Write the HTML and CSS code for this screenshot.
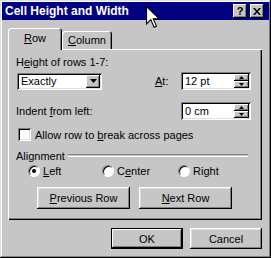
FILE: index.html
```html
<!DOCTYPE html>
<html lang="en">
<head>
    <meta charset="UTF-8">
    <title>Cell Height and Width</title>
    <link rel="stylesheet" href="styles.css">
</head>
<body>
    <div class="window">
        <div class="titlebar">
            <span class="title">Cell Height and Width</span>
            <div class="title-btns">
                <span class="tbtn">?</span>
                <span class="tbtn tbtn-close">
                    <svg width="8" height="7" viewBox="0 0 8 7"><path d="M0 0h2l2 2.5 2-2.5h2L5 3.5 8 7H6L4 4.5 2 7H0l3-3.5z" fill="#000"/></svg>
                </span>
            </div>
        </div>

        <div class="content">
            <div class="tabs">
                <div class="tab active"><u>R</u>ow</div>
                <div class="tab"><u>C</u>olumn</div>
            </div>

            <div class="panel">
                <div class="label">H<u>e</u>ight of rows 1-7:</div>

                <div class="field-grid">
                    <div class="combo">
                        <span class="combo-text">Exactly</span>
                        <span class="drop-btn"><svg width="7" height="4" viewBox="0 0 7 4"><path d="M0 0h7L3.5 4z" fill="#000"/></svg></span>
                    </div>
                    <span class="label"><u>A</u>t:</span>
                    <div class="spin">
                        <span class="spin-text">12 pt</span>
                        <span class="spin-btns">
                            <span class="spin-btn"><svg width="5" height="3" viewBox="0 0 5 3"><path d="M0 3h5L2.5 0z" fill="#000"/></svg></span>
                            <span class="spin-btn"><svg width="5" height="3" viewBox="0 0 5 3"><path d="M0 0h5L2.5 3z" fill="#000"/></svg></span>
                        </span>
                    </div>

                    <span class="label wide">Indent <u>f</u>rom left:</span>
                    <div class="spin">
                        <span class="spin-text">0 cm</span>
                        <span class="spin-btns">
                            <span class="spin-btn"><svg width="5" height="3" viewBox="0 0 5 3"><path d="M0 3h5L2.5 0z" fill="#000"/></svg></span>
                            <span class="spin-btn"><svg width="5" height="3" viewBox="0 0 5 3"><path d="M0 0h5L2.5 3z" fill="#000"/></svg></span>
                        </span>
                    </div>
                </div>

                <div class="check-row">
                    <span class="checkbox"></span>
                    <span>Allow row to <u>b</u>reak across pages</span>
                </div>

                <div class="group-title">
                    <span>Alignment</span>
                    <span class="etched"></span>
                </div>

                <div class="radios">
                    <div class="radio-item"><span class="radio checked"></span><span><u>L</u>eft</span></div>
                    <div class="radio-item"><span class="radio"></span><span>C<u>e</u>nter</span></div>
                    <div class="radio-item"><span class="radio"></span><span>Ri<u>g</u>ht</span></div>
                </div>

                <div class="row-btns">
                    <span class="btn"><u>P</u>revious Row</span>
                    <span class="btn"><u>N</u>ext Row</span>
                </div>
            </div>

            <div class="footer">
                <span class="btn btn-default">OK</span>
                <span class="btn btn-footer">Cancel</span>
            </div>
        </div>

        <svg class="cursor" width="14" height="23" viewBox="0 0 13 21">
            <path d="M0.5 0.5v16l4-4 3 7 2.2-1-3-6.8h5.6z" fill="#fff" stroke="#000" stroke-width="1"/>
        </svg>
    </div>
</body>
</html>
```

FILE: styles.css
```css
body {
    margin: 0;
    font-family: "Liberation Sans", Arial, sans-serif;
    font-size: 11px;
    color: #000;
    background: #c6c6c6;
}

.window {
    position: relative;
    width: 271px;
    height: 258px;
    box-sizing: border-box;
    padding: 2px;
    background: #c6c6c6;
    box-shadow: inset -1px -1px #000, inset 1px 1px #dfdfdf, inset -2px -2px #808080, inset 2px 2px #fff;
}

.titlebar {
    height: 18px;
    background: #000080;
    color: #fff;
    display: flex;
    align-items: center;
    padding: 0 5px 0 3px;
}

.title {
    flex: 1;
    font-weight: bold;
    font-size: 12px;
}

.title-btns {
    display: flex;
    gap: 3px;
}

.tbtn {
    width: 14px;
    height: 14px;
    box-sizing: border-box;
    display: flex;
    align-items: center;
    justify-content: center;
    background: #c6c6c6;
    color: #000;
    font-weight: bold;
    font-size: 11px;
    box-shadow: inset -1px -1px #000, inset 1px 1px #fff, inset -2px -2px #808080;
}

.content {
    padding: 8px 7px 0 6px;
}

.tabs {
    display: flex;
    align-items: flex-end;
    height: 21px;
    position: relative;
    z-index: 1;
}

.tab {
    height: 18px;
    width: 50px;
    box-sizing: border-box;
    display: flex;
    align-items: center;
    justify-content: center;
    border-radius: 3px 3px 0 0;
    background: #c6c6c6;
    box-shadow: inset 1px 1px #fff, inset -1px 0 #000, inset -2px 0 #808080;
}

.tab.active {
    width: 54px;
    height: 22px;
    margin-bottom: -1px;
    padding-bottom: 2px;
}

.panel {
    height: 171px;
    box-sizing: border-box;
    padding: 7px 8px 0 8px;
    box-shadow: inset 1px 1px #fff, inset -1px -1px #000, inset -2px -2px #808080;
}

.label {
    line-height: 13px;
}

.field-grid {
    display: grid;
    grid-template-columns: 139px 26px 70px;
    grid-auto-rows: 18px;
    row-gap: 12px;
    align-items: center;
    margin-top: 3px;
}

.field-grid .wide {
    grid-column: span 2;
}

.combo, .spin, .checkbox {
    background: #fff;
    box-shadow: inset 1px 1px #808080, inset -1px -1px #fff, inset 2px 2px #000, inset -2px -2px #dfdfdf;
}

.combo {
    margin-left: 1px;
    width: 85px;
    height: 17px;
    box-sizing: border-box;
    display: flex;
    align-items: center;
    padding: 2px;
}

.combo-text, .spin-text {
    flex: 1;
    padding-left: 2px;
}

.drop-btn {
    width: 14px;
    height: 13px;
    display: flex;
    align-items: center;
    justify-content: center;
    background: #c6c6c6;
    box-shadow: inset -1px -1px #000, inset 1px 1px #fff, inset -2px -2px #808080;
}

.spin {
    height: 18px;
    box-sizing: border-box;
    display: flex;
    align-items: center;
    padding: 2px;
}

.spin-btns {
    display: flex;
    flex-direction: column;
    width: 15px;
}

.spin-btn {
    height: 7px;
    display: flex;
    align-items: center;
    justify-content: center;
    background: #c6c6c6;
    box-shadow: inset -1px -1px #000, inset 1px 1px #fff, inset -2px -2px #808080;
}

.check-row {
    display: flex;
    align-items: center;
    gap: 4px;
    margin: 8px 0 0 2px;
    height: 13px;
}

.checkbox {
    width: 13px;
    height: 13px;
}

.group-title {
    display: flex;
    align-items: center;
    gap: 3px;
    margin-top: 8px;
    height: 13px;
    padding-right: 6px;
}

.etched {
    flex: 1;
    height: 1px;
    border-top: 1px solid #808080;
    border-bottom: 1px solid #fff;
}

.radios {
    display: flex;
    margin: 2px 0 0 12px;
    height: 13px;
}

.radio-item {
    display: flex;
    align-items: center;
    gap: 3px;
    width: 76px;
}

.radio-item + .radio-item {
    width: 78px;
}

.radio {
    width: 12px;
    height: 12px;
    box-sizing: border-box;
    border-radius: 50%;
    background: #fff;
    border: 1px solid;
    border-color: #808080 #fff #fff #808080;
    box-shadow: inset 1px 1px #000;
    display: flex;
    align-items: center;
    justify-content: center;
}

.radio.checked::after {
    content: "";
    width: 4px;
    height: 4px;
    border-radius: 50%;
    background: #000;
}

.row-btns {
    display: flex;
    gap: 9px;
    margin: 10px 0 0 21px;
}

.btn {
    width: 93px;
    height: 22px;
    box-sizing: border-box;
    display: flex;
    align-items: center;
    justify-content: center;
    background: #c6c6c6;
    box-shadow: inset -1px -1px #000, inset 1px 1px #fff, inset -2px -2px #808080, inset 2px 2px #dfdfdf;
}

.footer {
    display: flex;
    justify-content: flex-end;
    gap: 7px;
    margin-top: 8px;
}

.btn-footer, .btn-default {
    width: 72px;
    height: 21px;
}

.btn-default {
    border: 1px solid #000;
    box-shadow: inset -1px -1px #000, inset 1px 1px #fff, inset -2px -2px #808080;
}

.cursor {
    position: absolute;
    left: 146px;
    top: 6px;
}
```
